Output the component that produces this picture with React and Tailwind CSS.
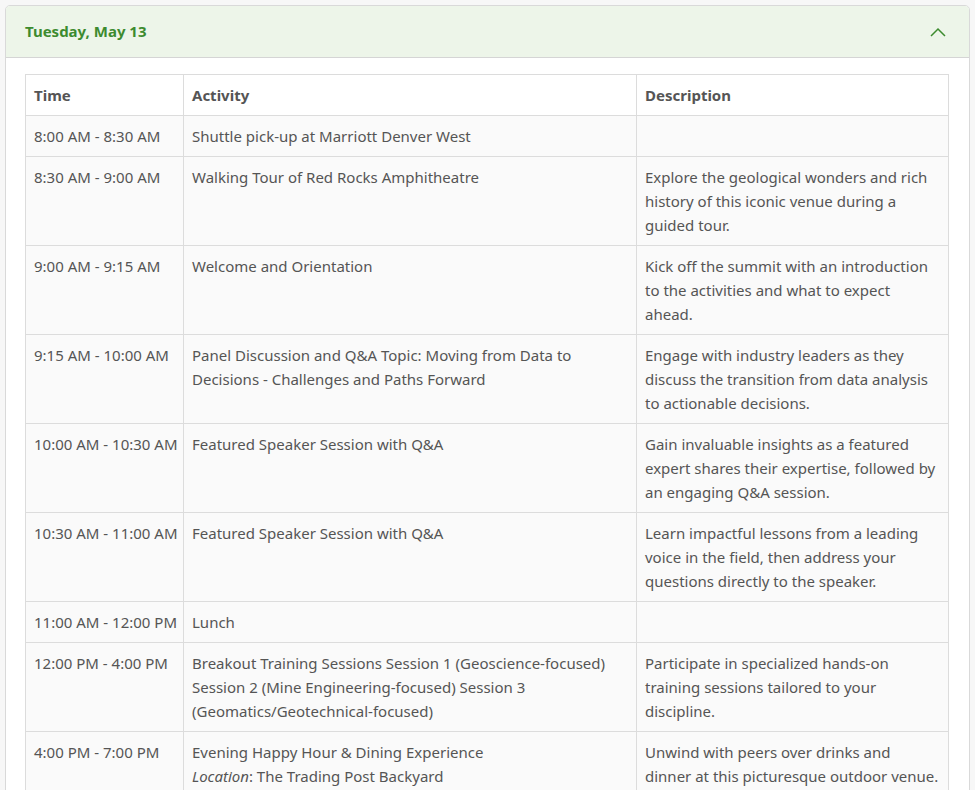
const rows = [
  ['8:00 AM - 8:30 AM', 'Shuttle pick-up at Marriott Denver West', ''],
  ['8:30 AM - 9:00 AM', 'Walking Tour of Red Rocks Amphitheatre', 'Explore the geological wonders and rich history of this iconic venue during a guided tour.'],
  ['9:00 AM - 9:15 AM', 'Welcome and Orientation', 'Kick off the summit with an introduction to the activities and what to expect ahead.'],
  ['9:15 AM - 10:00 AM', 'Panel Discussion and Q&A Topic: Moving from Data to Decisions - Challenges and Paths Forward', 'Engage with industry leaders as they discuss the transition from data analysis to actionable decisions.'],
  ['10:00 AM - 10:30 AM', 'Featured Speaker Session with Q&A', 'Gain invaluable insights as a featured expert shares their expertise, followed by an engaging Q&A session.'],
  ['10:30 AM - 11:00 AM', 'Featured Speaker Session with Q&A', 'Learn impactful lessons from a leading voice in the field, then address your questions directly to the speaker.'],
  ['11:00 AM - 12:00 PM', 'Lunch', ''],
  ['12:00 PM - 4:00 PM', 'Breakout Training Sessions Session 1 (Geoscience-focused) Session 2 (Mine Engineering-focused) Session 3 (Geomatics/Geotechnical-focused)', 'Participate in specialized hands-on training sessions tailored to your discipline.'],
  ['4:00 PM - 7:00 PM', null, 'Unwind with peers over drinks and dinner at this picturesque outdoor venue.'],
]

export default function App() {
  return (
    <div className="bg-[#f7f7f7] min-h-[790px] p-[5px] font-['Liberation_Sans',Arial,sans-serif] text-[15px] text-[#555]">
      <div className="bg-white border border-[#d9d9d9] rounded-[5px] overflow-hidden">
        <div className="bg-[#edf5e9] border-b border-[#d5d5d5] h-[52px] flex items-center justify-between pl-[19px] pr-[22px]">
          <span className="text-[#3d8b2f] font-bold text-[15px]">Tuesday, May 13</span>
          <svg width="18" height="12" viewBox="0 0 18 12" fill="none" stroke="#3d8b2f" strokeWidth="1.5">
            <path d="M2 10 L9 3 L16 10" />
          </svg>
        </div>
        <div className="px-[19px] pt-[16px] pb-[20px]">
          <table className="w-[924px] border-collapse table-fixed leading-[24px]">
            <colgroup>
              <col className="w-[158px]" />
              <col className="w-[453px]" />
              <col className="w-[312px]" />
            </colgroup>
            <thead>
              <tr className="bg-white">
                <th className="border border-[#dcdcdc] text-left font-bold px-[8px] py-[8px]">Time</th>
                <th className="border border-[#dcdcdc] text-left font-bold px-[8px] py-[8px]">Activity</th>
                <th className="border border-[#dcdcdc] text-left font-bold px-[8px] py-[8px]">Description</th>
              </tr>
            </thead>
            <tbody>
              {rows.map((r, i) => (
                <tr key={i} className="bg-[#fafafa] align-top">
                  <td className="border border-[#dcdcdc] px-[8px] py-[8px] whitespace-nowrap">{r[0]}</td>
                  <td className="border border-[#dcdcdc] px-[8px] py-[8px]">
                    {r[1] === null ? (
                      <>Evening Happy Hour &amp; Dining Experience<br /><em>Location</em>: The Trading Post Backyard</>
                    ) : r[1]}
                  </td>
                  <td className="border border-[#dcdcdc] px-[8px] py-[8px]">{r[2]}</td>
                </tr>
              ))}
            </tbody>
          </table>
        </div>
      </div>
    </div>
  )
}
